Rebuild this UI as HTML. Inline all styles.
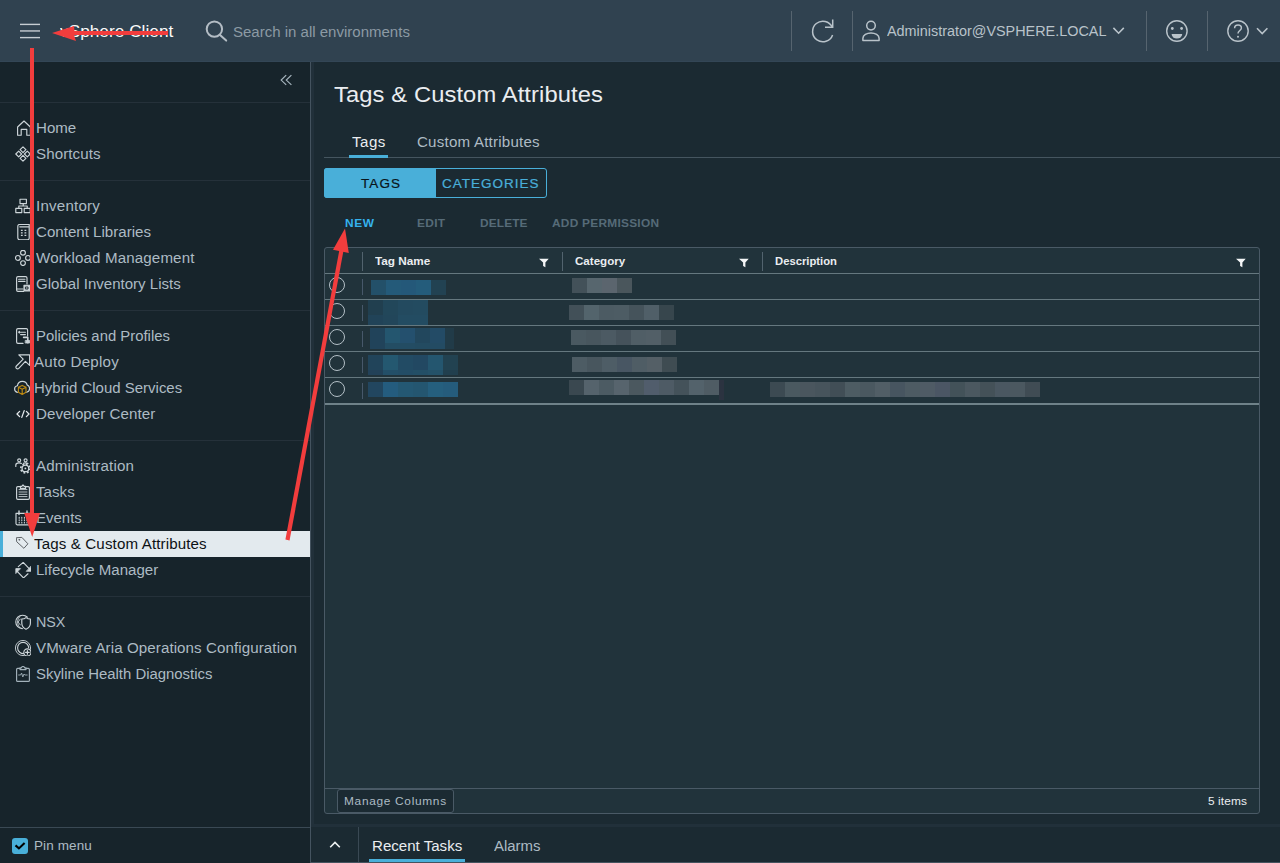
<!DOCTYPE html>
<html lang="en"><head><meta charset="utf-8"><title>vSphere Client - Tags &amp; Custom Attributes</title>
<style>
html,body{margin:0;padding:0;}
body{width:1280px;height:863px;overflow:hidden;position:relative;background:#1b2a32;font-family:"Liberation Sans","DejaVu Sans",sans-serif;}
div,span,svg{position:absolute;box-sizing:border-box;}
.tx{white-space:nowrap;line-height:20px;height:20px;transform-origin:0 50%;}
.hd{left:0;top:0;width:1280px;height:62px;background:#304250;}
.vd{width:1px;background:#56646f;top:11px;height:40px;}
.sb{left:0;top:62px;width:310px;height:801px;background:#17242b;}
.sbb{left:310px;top:62px;width:1px;height:801px;background:#44535f;}
.sbs{left:311px;top:62px;width:3px;height:765px;background:#21303a;}
.sep{left:0;width:310px;height:1px;background:#25313a;}
.sel{left:0;top:531px;width:310px;height:26px;background:#e3eaee;}
.selb{left:0;top:531px;width:3px;height:26px;background:#49afd9;}
.grid{left:324px;top:247px;width:936px;height:567px;background:#21333b;border:1px solid #4a5a66;border-radius:3px;}
.rl{left:325px;width:934px;height:1px;background:#65787f;}
.cs{width:1px;background:#52636e;}
.rad{width:16px;height:16px;border:1px solid #b4c0c7;border-radius:50%;}
.mz{height:15px;}
.mz i{display:block;float:left;height:100%;}
</style></head><body>

<div class="hd"></div><div style="left:0;top:61px;width:1280px;height:1px;background:#334656"></div>
<div class="vd" style="left:791px"></div><div class="vd" style="left:852px"></div><div class="vd" style="left:1146px"></div><div class="vd" style="left:1207px"></div>
<div class="sb"></div><div class="sbb"></div><div class="sbs"></div>
<div class="sep" style="top:102px"></div><div class="sep" style="top:180px"></div><div class="sep" style="top:310px"></div><div class="sep" style="top:440px"></div><div class="sep" style="top:596px"></div>
<div class="sep" style="top:827px;background:#3a4954"></div>
<div class="sel"></div><div class="selb"></div>
<div style="left:12px;top:838px;width:16px;height:16px;background:#49afd9;border-radius:3px"></div>
<svg style="left:12px;top:838px" width="16" height="16" viewBox="0 0 16 16"><path d="M3.5 7.4 L6.9 10.4 L12.6 4.9" fill="none" stroke="#000" stroke-width="2.1"/></svg>
<!-- main -->
<div style="left:324px;top:157px;width:956px;height:1px;background:#45555f"></div>
<div style="left:349px;top:155px;width:39px;height:3px;background:#49afd9"></div>
<div style="left:324px;top:168px;width:223px;height:30px;border:1px solid #49afd9;border-radius:3px"></div>
<div style="left:324px;top:168px;width:112px;height:30px;background:#49afd9;border-radius:3px 0 0 3px"></div>
<div class="grid"></div>
<div class="rl" style="top:273px"></div><div class="rl" style="top:299px"></div><div class="rl" style="top:325px"></div><div class="rl" style="top:351px"></div><div class="rl" style="top:377px"></div>
<div class="rl" style="top:403px;height:2px;background:#6f8289"></div>
<div class="rl" style="top:788px;background:#4a5a66"></div>
<div class="cs" style="left:362px;top:252px;height:19px"></div><div class="cs" style="left:562px;top:252px;height:19px"></div><div class="cs" style="left:762px;top:252px;height:19px"></div>
<div class="rad" style="left:329px;top:277px"></div><div class="cs" style="left:362px;top:279px;height:16px;background:#47586a"></div>
<div class="rad" style="left:329px;top:303px"></div><div class="cs" style="left:362px;top:305px;height:16px;background:#47586a"></div>
<div class="rad" style="left:329px;top:329px"></div><div class="cs" style="left:362px;top:331px;height:16px;background:#47586a"></div>
<div class="rad" style="left:329px;top:355px"></div><div class="cs" style="left:362px;top:357px;height:16px;background:#47586a"></div>
<div class="rad" style="left:329px;top:381px"></div><div class="cs" style="left:362px;top:383px;height:16px;background:#47586a"></div>
<div class="mz" style="left:371px;top:280px;height:15px;width:76px"><i style="width:15px;background:#235069"></i><i style="width:15px;background:#245a79"></i><i style="width:15px;background:#245879"></i><i style="width:15px;background:#245c7b"></i><i style="width:15px;background:#224252"></i></div>
<div class="mz" style="left:368px;top:300px;height:15px;width:61px"><i style="width:15px;background:#213f4f"></i><i style="width:15px;background:#22475a"></i><i style="width:15px;background:#234a5f"></i><i style="width:15px;background:#234b60"></i></div>
<div class="mz" style="left:368px;top:315px;height:10px;width:61px"><i style="width:15px;background:#214358"></i><i style="width:15px;background:#22465a"></i><i style="width:15px;background:#234c62"></i><i style="width:15px;background:#234c62"></i></div>
<div class="mz" style="left:370px;top:328px;height:15px;width:76px"><i style="width:15px;background:#21435a"></i><i style="width:15px;background:#24566f"></i><i style="width:15px;background:#24506e"></i><i style="width:15px;background:#22475d"></i><i style="width:15px;background:#234b66"></i></div>
<div style="left:445px;top:328px;width:9px;height:21px;background:#213b48"></div><div class="mz" style="left:370px;top:343px;height:6px;width:76px"><i style="width:15px;background:#21435a"></i><i style="width:15px;background:#234d63"></i><i style="width:15px;background:#234c63"></i><i style="width:15px;background:#234b61"></i><i style="width:15px;background:#234b63"></i></div>
<div class="mz" style="left:368px;top:355px;height:15px;width:91px"><i style="width:15px;background:#21445a"></i><i style="width:15px;background:#245870"></i><i style="width:15px;background:#224b64"></i><i style="width:15px;background:#224862"></i><i style="width:15px;background:#24566f"></i><i style="width:15px;background:#224251"></i></div>
<div class="mz" style="left:368px;top:370px;height:5px;width:91px"><i style="width:15px;background:#224158"></i><i style="width:15px;background:#234f68"></i><i style="width:15px;background:#234d66"></i><i style="width:15px;background:#234f66"></i><i style="width:15px;background:#245269"></i><i style="width:15px;background:#213f4e"></i></div>
<div class="mz" style="left:368px;top:382px;height:15px;width:91px"><i style="width:15px;background:#22465f"></i><i style="width:15px;background:#245c7e"></i><i style="width:15px;background:#245873"></i><i style="width:15px;background:#245670"></i><i style="width:15px;background:#255f7e"></i><i style="width:15px;background:#255c7c"></i></div>
<div class="mz" style="left:572px;top:278px;height:15px;width:61px"><i style="width:15px;background:#435159"></i><i style="width:15px;background:#57666e"></i><i style="width:15px;background:#5b656e"></i><i style="width:15px;background:#4a565c"></i></div>
<div class="mz" style="left:569px;top:305px;height:15px;width:106px"><i style="width:15px;background:#425058"></i><i style="width:15px;background:#53646c"></i><i style="width:15px;background:#4c5b63"></i><i style="width:15px;background:#4d5c64"></i><i style="width:15px;background:#45535b"></i><i style="width:15px;background:#505f68"></i><i style="width:15px;background:#37464d"></i></div>
<div class="mz" style="left:571px;top:330px;height:15px;width:106px"><i style="width:15px;background:#4a5961"></i><i style="width:15px;background:#48565e"></i><i style="width:15px;background:#4c5a63"></i><i style="width:15px;background:#45525b"></i><i style="width:15px;background:#505e66"></i><i style="width:15px;background:#525f67"></i><i style="width:15px;background:#424f56"></i></div>
<div class="mz" style="left:572px;top:357px;height:15px;width:106px"><i style="width:15px;background:#4d5c64"></i><i style="width:15px;background:#48565e"></i><i style="width:15px;background:#4e5d66"></i><i style="width:15px;background:#485663"></i><i style="width:15px;background:#4f5d65"></i><i style="width:15px;background:#545f66"></i><i style="width:15px;background:#3f4c52"></i></div>
<div class="mz" style="left:569px;top:380px;height:15px;width:151px"><i style="width:15px;background:#3a4850"></i><i style="width:15px;background:#55636c"></i><i style="width:15px;background:#4c5b63"></i><i style="width:15px;background:#57646d"></i><i style="width:15px;background:#4b585f"></i><i style="width:15px;background:#515d6c"></i><i style="width:15px;background:#4e5b65"></i><i style="width:15px;background:#44525a"></i><i style="width:15px;background:#53626b"></i><i style="width:15px;background:#4f5c64"></i></div>
<div style="left:719px;top:380px;width:5px;height:20px;background:#2b3340"></div><div class="mz" style="left:770px;top:382px;height:15px;width:271px"><i style="width:15px;background:#3c4a52"></i><i style="width:15px;background:#4a5960"></i><i style="width:15px;background:#4a565e"></i><i style="width:15px;background:#47545c"></i><i style="width:15px;background:#414e56"></i><i style="width:15px;background:#4d5c63"></i><i style="width:15px;background:#4a5860"></i><i style="width:15px;background:#515e66"></i><i style="width:15px;background:#475560"></i><i style="width:15px;background:#4d5b63"></i><i style="width:15px;background:#4f5b65"></i><i style="width:15px;background:#4b5664"></i><i style="width:15px;background:#435259"></i><i style="width:15px;background:#4b5860"></i><i style="width:15px;background:#445158"></i><i style="width:15px;background:#4a5761"></i><i style="width:15px;background:#4b5860"></i><i style="width:15px;background:#404c54"></i></div>

<div style="left:337px;top:789px;width:117px;height:24px;border:1px solid #4a5a66;border-radius:3px;background:#1b2a32"></div>
<!-- bottom panel -->
<div style="left:311px;top:824px;width:969px;height:3px;background:#21303a"></div>
<div style="left:358px;top:827px;width:1px;height:36px;background:#3a4954"></div>
<div style="left:311px;top:862px;width:969px;height:1px;background:#44535f"></div>
<div style="left:369px;top:859px;width:96px;height:3px;background:#49afd9"></div>
<svg style="left:20px;top:22px" width="20" height="18" viewBox="0 0 20 18"><g stroke="#c6cdd2" stroke-width="1.4"><line x1="0" y1="2.4" x2="20" y2="2.4"/><line x1="0" y1="8.95" x2="20" y2="8.95"/><line x1="0" y1="15.6" x2="20" y2="15.6"/></g></svg>
<svg style="left:204px;top:18px" width="26" height="26" viewBox="0 0 26 26"><g fill="none" stroke="#b4bdc5" stroke-width="2" stroke-linecap="round"><circle cx="10.4" cy="11.1" r="7.7"/><line x1="16.3" y1="17.2" x2="22.2" y2="22.6"/></g></svg>
<svg style="left:808px;top:16px" width="30" height="30" viewBox="0 0 30 30"><g fill="none" stroke="#b9c3ca" stroke-width="1.5"><path d="M24.3 11.3 A10.3 10.3 0 1 0 24.6 18.9"/><path d="M24.7 3.5 V11.2 H17"/></g></svg>
<svg style="left:860px;top:18px" width="22" height="26" viewBox="0 0 22 26"><g fill="none" stroke="#b9c3ca" stroke-width="1.5"><circle cx="11" cy="7.6" r="4.3"/><path d="M2.9 22.4 H19.1 V20.2 C19.1 17.2 15.2 14.9 11 14.9 C6.8 14.9 2.9 17.2 2.9 20.2 Z" stroke-linejoin="round"/></g></svg>
<svg style="left:1111px;top:24px" width="16" height="14" viewBox="0 0 16 14"><path d="M2.4 3.9 L7.6 9.2 L12.8 3.9" fill="none" stroke="#b9c3ca" stroke-width="1.6"/></svg>
<svg style="left:1255px;top:24px" width="16" height="14" viewBox="0 0 16 14"><path d="M2 4.2 L7.2 9.5 L12.4 4.2" fill="none" stroke="#b9c3ca" stroke-width="1.6"/></svg>
<svg style="left:1164px;top:18px" width="26" height="26" viewBox="0 0 26 26"><g><circle cx="12.9" cy="13" r="10.2" fill="none" stroke="#b9c3ca" stroke-width="1.4"/><circle cx="8.3" cy="10.5" r="1.4" fill="#b9c3ca"/><circle cx="17.6" cy="10.5" r="1.4" fill="#b9c3ca"/><path d="M7.6 15.9 H18.2 A5.3 4.6 0 0 1 7.6 15.9 Z" fill="#b9c3ca"/></g></svg>
<svg style="left:1225px;top:18px" width="26" height="26" viewBox="0 0 26 26"><g fill="none" stroke="#b9c3ca"><circle cx="13" cy="13" r="10.2" stroke-width="1.4"/><path d="M9.6 10.2 C9.6 7.9 11.2 6.9 13 6.9 C14.9 6.9 16.4 8 16.4 9.9 C16.4 12.4 13 12.6 13 15.6" stroke-width="1.5"/></g><circle cx="13" cy="18.7" r="1" fill="#b9c3ca"/></svg>
<svg style="left:278px;top:72px" width="16" height="16" viewBox="0 0 16 16"><g fill="none" stroke="#a6b5be" stroke-width="1.2"><path d="M8.2 3.1 L3.2 8.1 L8.2 12.9"/><path d="M13.4 3.1 L8.3 8.1 L13.4 12.9"/></g></svg>
<svg style="left:327px;top:837px" width="16" height="16" viewBox="0 0 16 16"><path d="M3.2 10.3 L8 5.4 L12.8 10.3" fill="none" stroke="#eef1f2" stroke-width="1.6"/></svg>
<svg style="left:538.9px;top:257px" width="11" height="11" viewBox="0 0 11 11"><path d="M0 1.75 H9.7 L6.4 5.5 V10.3 L4.1 9.1 V5.5 Z" fill="#f4f6f7"/></svg>
<svg style="left:738.9px;top:257px" width="11" height="11" viewBox="0 0 11 11"><path d="M0 1.75 H9.7 L6.4 5.5 V10.3 L4.1 9.1 V5.5 Z" fill="#f4f6f7"/></svg>
<svg style="left:1235.9px;top:257px" width="11" height="11" viewBox="0 0 11 11"><path d="M0 1.75 H9.7 L6.4 5.5 V10.3 L4.1 9.1 V5.5 Z" fill="#f4f6f7"/></svg>
<svg style="left:15.5px;top:120px" width="16" height="16" viewBox="0 0 16 16"><g fill="none" stroke="#ced6da" stroke-width="1.15" stroke-linejoin="round" stroke-linecap="round"><path d="M1.6 15.2 V7 L8 1 L14.4 7 V15.2 H10.8 V9.4 H5.2 V15.2 Z"/></g></svg>
<svg style="left:15px;top:146px" width="16" height="16" viewBox="0 0 16 16"><g fill="none" stroke="#ced6da" stroke-width="1.15" stroke-linejoin="round" stroke-linecap="round"><path d="M8 0.8 L10.9 3.7 L8 6.6 L5.1 3.7 Z"/><path d="M3.7 5.1 L6.6 8 L3.7 10.9 L0.8 8 Z"/><path d="M12.3 5.1 L15.2 8 L12.3 10.9 L9.4 8 Z"/><path d="M8 9.4 L10.9 12.3 L8 15.2 L5.1 12.3 Z"/></g></svg>
<svg style="left:14.5px;top:198px" width="16" height="16" viewBox="0 0 16 16"><g fill="none" stroke="#ced6da" stroke-width="1.15" stroke-linejoin="round" stroke-linecap="round"><rect x="5" y="1.2" width="6.4" height="4.4"/><rect x="0.8" y="10.4" width="6" height="4.2"/><rect x="9.2" y="10.4" width="6" height="4.2"/><path d="M8.2 5.6 V8 M3.8 10.4 V8 H12.2 V10.4"/></g></svg>
<svg style="left:14.5px;top:224px" width="16" height="16" viewBox="0 0 16 16"><g fill="none" stroke="#ced6da" stroke-width="1.15" stroke-linejoin="round" stroke-linecap="round"><path d="M2.8 2.4 C2.8 1.2 3.6 0.4 4.8 0.4 H14.2 V2.8 H4.8 M2.8 2.4 V13.8 C2.8 15 3.6 15.8 4.8 15.8 H12.4 C13.6 15.8 14.2 15 14.2 14 V2.8"/><path d="M5.9 6.4 H7.7 M9.5 6.4 H11.3 M5.9 8.9 H7.7 M9.5 8.9 H11.3 M5.9 11.4 H7.7 M9.5 11.4 H11.3" stroke-width="1.1" stroke-linecap="butt"/></g></svg>
<svg style="left:15px;top:250px" width="16" height="16" viewBox="0 0 16 16"><g fill="none" stroke="#ced6da" stroke-width="1.15" stroke-linejoin="round" stroke-linecap="round"><circle cx="8" cy="2.7" r="2.4"/><circle cx="2.9" cy="7.9" r="2.4"/><circle cx="13" cy="7.9" r="2.4"/><circle cx="8" cy="13.1" r="2.4"/></g></svg>
<svg style="left:15px;top:276px" width="16" height="16" viewBox="0 0 16 16"><g fill="none" stroke="#ced6da" stroke-width="1.15" stroke-linejoin="round" stroke-linecap="round"><path d="M8.6 15.4 H3 C2.2 15.4 1.6 14.8 1.6 14 V2 C1.6 1.2 2.2 0.6 3 0.6 H10.6 C11.4 0.6 12 1.2 12 2 V8"/><path d="M3.6 3.2 H10 M3.6 5.4 H10 M1.8 13 H8"/><rect x="9" y="9.2" width="6" height="5.6" fill="#c9d1d6"/><path d="M10.8 11 H13 V13 H10.8 Z" stroke="#17242b" stroke-width="0.9"/></g></svg>
<svg style="left:15px;top:328px" width="16" height="16" viewBox="0 0 16 16"><g fill="none" stroke="#ced6da" stroke-width="1.15" stroke-linejoin="round" stroke-linecap="round"><path d="M8 15.4 H3 C2.2 15.4 1.6 14.8 1.6 14 V2 C1.6 1.2 2.2 0.6 3 0.6 H11.2 C12 0.6 12.6 1.2 12.6 2 V8"/><path d="M4 4.2 H10.4 M5.6 6.6 H10.4 M4.4 3.4 L3.6 4.2 L4.4 5" /><path d="M8.6 9.4 H12.8 V14.8" stroke-width="1.6"/><rect x="10.6" y="12.4" width="4" height="2.6" fill="#c9d1d6" stroke-width="0.8"/></g></svg>
<svg style="left:14.5px;top:354px" width="16" height="16" viewBox="0 0 16 16"><g fill="none" stroke="#ced6da" stroke-width="1.15" stroke-linejoin="round" stroke-linecap="round"><path d="M3.8 0.8 H14.6 V11.4 L10.4 7.4 L3.8 14.4 C3.1 15.1 2.1 15.1 1.4 14.4 C0.7 13.7 0.7 12.7 1.4 12 L8.2 5.2 Z"/></g></svg>
<svg style="left:13.6px;top:380px" width="16" height="16" viewBox="0 0 16 16"><g fill="none" stroke="#ced6da" stroke-width="1.15" stroke-linejoin="round" stroke-linecap="round"><path d="M3.4 12.4 C1.6 12 0.6 10.6 0.6 9 C0.6 7.4 1.8 6 3.4 5.8 C3.8 3.2 5.8 1.4 8.4 1.4 C10.8 1.4 12.6 2.8 13.2 5 C14.8 5.6 15.6 7 15.6 8.6 C15.6 10.4 14.4 11.8 12.8 12.3"/></g></svg>
<svg style="left:13.6px;top:380px" width="16" height="16" viewBox="0 0 16 16"><g fill="none" stroke="#bd8a12" stroke-width="1.15" stroke-linejoin="round" stroke-linecap="round"><path d="M8.2 5.4 L12 7.2 V12.2 L8.2 14.4 L4.4 12.2 V7.2 Z M4.4 7.2 L8.2 9.2 L12 7.2 M8.2 9.2 V14.4"/></g></svg>
<svg style="left:15px;top:406px" width="16" height="16" viewBox="0 0 16 16"><g fill="none" stroke="#e4e8eb" stroke-width="1.15" stroke-linejoin="round" stroke-linecap="round"><path d="M4.6 5.4 L2 8 L4.6 10.6 M11.4 5.4 L14 8 L11.4 10.6 M9.2 4.6 L6.8 11.4" stroke-width="1.3"/></g></svg>
<svg style="left:15px;top:458px" width="16" height="16" viewBox="0 0 16 16"><g fill="none" stroke="#ced6da" stroke-width="1.15" stroke-linejoin="round" stroke-linecap="round"><circle cx="4.2" cy="2.3" r="1.5"/><circle cx="10.6" cy="2.3" r="1.5"/><path d="M0.8 8.4 V7 C0.8 5.6 2.2 4.8 4 4.8 C5 4.8 5.8 5 6.4 5.5 M8.4 5.2 C9 4.9 9.8 4.8 10.6 4.8 C11.6 4.8 12.4 5 13 5.4"/><circle cx="10.4" cy="10.4" r="3.3" stroke-width="1.2"/><circle cx="10.4" cy="10.4" r="4.6" stroke-width="1.7" stroke-dasharray="1.8 1.81" stroke-linecap="butt"/><circle cx="10.4" cy="10.4" r="0.9" fill="#d6dce0" stroke="none"/></g></svg>
<svg style="left:14.8px;top:484px" width="16" height="16" viewBox="0 0 16 16"><g fill="none" stroke="#ced6da" stroke-width="1.15" stroke-linejoin="round" stroke-linecap="round"><path d="M5.4 2.6 H2.8 C2 2.6 1.6 3.2 1.6 3.8 V14 C1.6 14.8 2.2 15.3 2.8 15.3 H13.2 C14 15.3 14.4 14.8 14.4 14 V3.8 C14.4 3.2 14 2.6 13.2 2.6 H10.6"/><path d="M5.4 4.4 V2.4 H6.8 L8 0.9 L9.2 2.4 H10.6 V4.4 Z"/><path d="M4 5.6 H12 M4 8 H12 M4 10.3 H12 M4 12.6 H12" stroke-width="0.9"/></g></svg>
<svg style="left:14.5px;top:510px" width="16" height="16" viewBox="0 0 16 16"><g fill="none" stroke="#ced6da" stroke-width="1.15" stroke-linejoin="round" stroke-linecap="round"><path d="M1 3.4 H15 V13.6 C15 14.4 14.4 14.8 13.8 14.8 H2.2 C1.4 14.8 1 14.4 1 13.6 Z"/><path d="M4 1 V4.6 M12 1 V4.6" stroke-width="1.4"/><path d="M4.2 7.4 V8.2 M6.8 7.4 V8.2 M9.4 7.4 V8.2 M12 7.4 V8.2 M4.2 9.8 V10.6 M6.8 9.8 V10.6 M9.4 9.8 V10.6 M12 9.8 V10.6 M4.2 12.2 V13 M6.8 12.2 V13 M9.4 12.2 V13 M12 12.2 V13" stroke-width="1.1"/></g></svg>
<svg style="left:15.5px;top:536px" width="16" height="16" viewBox="0 0 16 16"><g fill="none" stroke="#5e6367" stroke-width="1.15" stroke-linejoin="round" stroke-linecap="round"><path d="M0.7 1.7 L5.9 1.4 L11.9 7.8 L7.9 12.3 L1 6 Z" stroke-width="1"/><circle cx="3.2" cy="3.8" r="0.45" stroke-width="0.9"/></g></svg>
<svg style="left:14.5px;top:562px" width="16" height="16" viewBox="0 0 16 16"><g fill="none" stroke="#ced6da" stroke-width="1.15" stroke-linejoin="round" stroke-linecap="round"><path d="M3.3 4.6 L8.2 0.4 L14.4 6.8"/><path d="M16.2 4.4 V9.3 H11.6 Z" fill="#ced6da" stroke-width="0.8"/><path d="M13 11.8 L8.5 15.9 L2.2 9.4"/><path d="M5.2 6.6 H0.8 V11.2 Z" fill="#ced6da" stroke-width="0.8"/></g></svg>
<svg style="left:15px;top:614px" width="16" height="16" viewBox="0 0 16 16"><g fill="none" stroke="#ced6da" stroke-width="1.15" stroke-linejoin="round" stroke-linecap="round"><path d="M7.4 14.6 C3.6 14.6 0.8 11.6 0.8 8 C0.8 4.2 3.8 1.2 7.6 1.2 C9.6 1.2 11.2 2 12.4 3.2"/><path d="M5.4 2 C3.6 3.4 2.6 5.4 2.6 8 C2.6 10.4 3.6 12.4 5.2 13.8 M5.4 5 L3 8 L5.4 11" stroke-width="0.9"/><path d="M11 3.6 C12.4 4.6 13.8 5 15.4 5 V9.2 C15.4 12 13.6 14 11 15.2 C8.4 14 6.8 12 6.8 9.2 V5 C8.4 5 9.8 4.6 11 3.6 Z"/></g></svg>
<svg style="left:14.5px;top:640px" width="16" height="16" viewBox="0 0 16 16"><g fill="none" stroke="#ced6da" stroke-width="1.15" stroke-linejoin="round" stroke-linecap="round"><circle cx="8" cy="8" r="7.6" stroke-width="0.9"/><path d="M10 13.4 C6.4 14.4 2.6 12 2.6 8 C2.6 4.6 5 2.4 8 2.4 C11.4 2.4 13.6 5 13.6 7.6" stroke-width="1.1"/><circle cx="12.4" cy="12.4" r="3.6" fill="#17242b"/><path d="M12.4 10.6 V14.2 M10.6 12.4 H14.2" stroke-width="1.2"/></g></svg>
<svg style="left:15px;top:666px" width="16" height="16" viewBox="0 0 16 16"><g fill="none" stroke="#a3b2bb" stroke-width="1.15" stroke-linejoin="round" stroke-linecap="round"><path d="M5 2.4 H2.6 C2 2.4 1.6 2.8 1.6 3.4 V14.4 C1.6 15 2 15.4 2.6 15.4 H13.4 C14 15.4 14.4 15 14.4 14.4 V3.4 C14.4 2.8 14 2.4 13.4 2.4 H11"/><path d="M5 3.6 V1.8 H6.4 C6.6 1 7.2 0.5 8 0.5 C8.8 0.5 9.4 1 9.6 1.8 H11 V3.6 Z"/><path d="M3.6 9 H5.6 L6.6 7 L7.8 11 L9 8 L9.8 9 H12.2" stroke-width="0.9"/></g></svg>
<span id="brand" class="tx" style="left:59.90px;top:21.80px;font-size:16px;font-weight:400;color:#fafafa;letter-spacing:0.000px;transform:scaleX(1.0795);">vSphere Client</span>
<span id="search" class="tx" style="left:233.30px;top:22.00px;font-size:14px;font-weight:400;color:#8c9aa4;letter-spacing:-0.000px;transform:scaleX(1.0722);">Search in all environments</span>
<span id="user" class="tx" style="left:886.80px;top:21.00px;font-size:14px;font-weight:400;color:#b9c3ca;letter-spacing:0.000px;transform:scaleX(1.0282);">Administrator@VSPHERE.LOCAL</span>
<span id="n0" class="tx" style="left:35.60px;top:118.00px;font-size:14px;font-weight:400;color:#adbbc4;letter-spacing:0.000px;transform:scaleX(1.0760);">Home</span>
<span id="n1" class="tx" style="left:35.60px;top:144.00px;font-size:14px;font-weight:400;color:#adbbc4;letter-spacing:0.084px;transform:scaleX(1.0800);">Shortcuts</span>
<span id="n2" class="tx" style="left:35.60px;top:196.00px;font-size:14px;font-weight:400;color:#adbbc4;letter-spacing:0.185px;transform:scaleX(1.0800);">Inventory</span>
<span id="n3" class="tx" style="left:35.60px;top:222.00px;font-size:14px;font-weight:400;color:#adbbc4;letter-spacing:0.000px;transform:scaleX(1.0785);">Content Libraries</span>
<span id="n4" class="tx" style="left:35.60px;top:248.00px;font-size:14px;font-weight:400;color:#adbbc4;letter-spacing:0.121px;transform:scaleX(1.0800);">Workload Management</span>
<span id="n5" class="tx" style="left:35.60px;top:274.00px;font-size:14px;font-weight:400;color:#adbbc4;letter-spacing:0.000px;transform:scaleX(1.0756);">Global Inventory Lists</span>
<span id="n6" class="tx" style="left:35.60px;top:326.00px;font-size:14px;font-weight:400;color:#adbbc4;letter-spacing:-0.000px;transform:scaleX(1.0622);">Policies and Profiles</span>
<span id="n7" class="tx" style="left:34.10px;top:352.00px;font-size:14px;font-weight:400;color:#adbbc4;letter-spacing:0.224px;transform:scaleX(1.0800);">Auto Deploy</span>
<span id="n8" class="tx" style="left:33.50px;top:378.00px;font-size:14px;font-weight:400;color:#adbbc4;letter-spacing:0.000px;transform:scaleX(1.0700);">Hybrid Cloud Services</span>
<span id="n9" class="tx" style="left:35.60px;top:404.00px;font-size:14px;font-weight:400;color:#adbbc4;letter-spacing:0.042px;transform:scaleX(1.0800);">Developer Center</span>
<span id="n10" class="tx" style="left:35.70px;top:456.00px;font-size:14px;font-weight:400;color:#adbbc4;letter-spacing:0.150px;transform:scaleX(1.0800);">Administration</span>
<span id="n11" class="tx" style="left:35.70px;top:482.00px;font-size:14px;font-weight:400;color:#adbbc4;letter-spacing:0.009px;transform:scaleX(1.0800);">Tasks</span>
<span id="n12" class="tx" style="left:35.60px;top:508.00px;font-size:14px;font-weight:400;color:#adbbc4;letter-spacing:0.000px;transform:scaleX(1.0698);">Events</span>
<span id="n13" class="tx" style="left:34.10px;top:534.00px;font-size:14px;font-weight:400;color:#0c1115;letter-spacing:0.118px;transform:scaleX(1.0800);">Tags &amp; Custom Attributes</span>
<span id="n14" class="tx" style="left:35.60px;top:560.00px;font-size:14px;font-weight:400;color:#adbbc4;letter-spacing:0.000px;transform:scaleX(1.0755);">Lifecycle Manager</span>
<span id="n15" class="tx" style="left:35.60px;top:612.00px;font-size:14px;font-weight:400;color:#adbbc4;letter-spacing:-0.000px;transform:scaleX(1.0209);">NSX</span>
<span id="n16" class="tx" style="left:35.60px;top:638.00px;font-size:14px;font-weight:400;color:#adbbc4;letter-spacing:0.079px;transform:scaleX(1.0800);">VMware Aria Operations Configuration</span>
<span id="n17" class="tx" style="left:35.60px;top:664.00px;font-size:14px;font-weight:400;color:#adbbc4;letter-spacing:0.000px;transform:scaleX(1.0643);">Skyline Health Diagnostics</span>
<span id="pin" class="tx" style="left:33.50px;top:836.00px;font-size:12.5px;font-weight:400;color:#adbbc4;letter-spacing:0.101px;transform:scaleX(1.0800);">Pin menu</span>
<span id="title" class="tx" style="left:334.30px;top:85.00px;font-size:22px;font-weight:400;color:#eaedf0;letter-spacing:0.086px;transform:scaleX(1.0800);">Tags &amp; Custom Attributes</span>
<span id="tab1" class="tx" style="left:352.20px;top:132.00px;font-size:14px;font-weight:400;color:#eaedf0;letter-spacing:0.449px;transform:scaleX(1.0800);">Tags</span>
<span id="tab2" class="tx" style="left:416.90px;top:132.00px;font-size:14px;font-weight:400;color:#adbbc4;letter-spacing:0.189px;transform:scaleX(1.0800);">Custom Attributes</span>
<span id="bg1" class="tx" style="left:360.90px;top:173.50px;font-size:12.5px;font-weight:400;color:#0a151b;letter-spacing:1.001px;transform:scaleX(1.0800);-webkit-text-stroke:0.22px #0a151b;">TAGS</span>
<span id="bg2" class="tx" style="left:442.10px;top:173.50px;font-size:12.5px;font-weight:400;color:#49afd9;letter-spacing:0.925px;transform:scaleX(1.0800);-webkit-text-stroke:0.22px #49afd9;">CATEGORIES</span>
<span id="a1" class="tx" style="left:344.90px;top:213.00px;font-size:11px;font-weight:700;color:#35b2ee;letter-spacing:0.544px;transform:scaleX(1.0800);">NEW</span>
<span id="a2" class="tx" style="left:416.90px;top:213.00px;font-size:11px;font-weight:700;color:#566b78;letter-spacing:0.319px;transform:scaleX(1.0800);">EDIT</span>
<span id="a3" class="tx" style="left:479.70px;top:213.00px;font-size:11px;font-weight:700;color:#566b78;letter-spacing:0.115px;transform:scaleX(1.0800);">DELETE</span>
<span id="a4" class="tx" style="left:552.00px;top:213.00px;font-size:11px;font-weight:700;color:#566b78;letter-spacing:0.239px;transform:scaleX(1.0800);">ADD PERMISSION</span>
<span id="h1" class="tx" style="left:375.20px;top:251.00px;font-size:11px;font-weight:700;color:#eaedf0;letter-spacing:0.000px;transform:scaleX(1.0683);">Tag Name</span>
<span id="h2" class="tx" style="left:575.20px;top:251.00px;font-size:11px;font-weight:700;color:#eaedf0;letter-spacing:0.000px;transform:scaleX(1.0527);">Category</span>
<span id="h3" class="tx" style="left:775.20px;top:251.00px;font-size:11px;font-weight:700;color:#eaedf0;letter-spacing:-0.000px;transform:scaleX(1.0229);">Description</span>
<span id="mc" class="tx" style="left:343.90px;top:791.00px;font-size:11px;font-weight:400;color:#adbbc4;letter-spacing:0.640px;transform:scaleX(1.0800);">Manage Columns</span>
<span id="items" class="tx" style="left:1208.30px;top:791.00px;font-size:11px;font-weight:400;color:#eaedf0;letter-spacing:0.092px;transform:scaleX(1.0800);">5 items</span>
<span id="rt" class="tx" style="left:371.80px;top:836.00px;font-size:14px;font-weight:400;color:#eaedf0;letter-spacing:0.000px;transform:scaleX(1.0766);">Recent Tasks</span>
<span id="al" class="tx" style="left:493.70px;top:836.00px;font-size:14px;font-weight:400;color:#adbbc4;letter-spacing:0.000px;transform:scaleX(1.0674);">Alarms</span>
<svg style="left:0;top:0" width="1280" height="863" viewBox="0 0 1280 863">
<g fill="#f23d3d" stroke="none">
<polygon points="168,31 168,35 74,35 76,41 52,33 74,26 74.5,31"/>
<polygon points="30,48 34,48 34,513 40,513 32.2,537 24.2,513 30,513"/>
</g>
<line x1="287.5" y1="540" x2="341.5" y2="250" stroke="#f23d3d" stroke-width="4.2"/>
<polygon points="345,228.6 333,249.7 348.8,253" fill="#f23d3d"/>
</svg>

</body></html>
